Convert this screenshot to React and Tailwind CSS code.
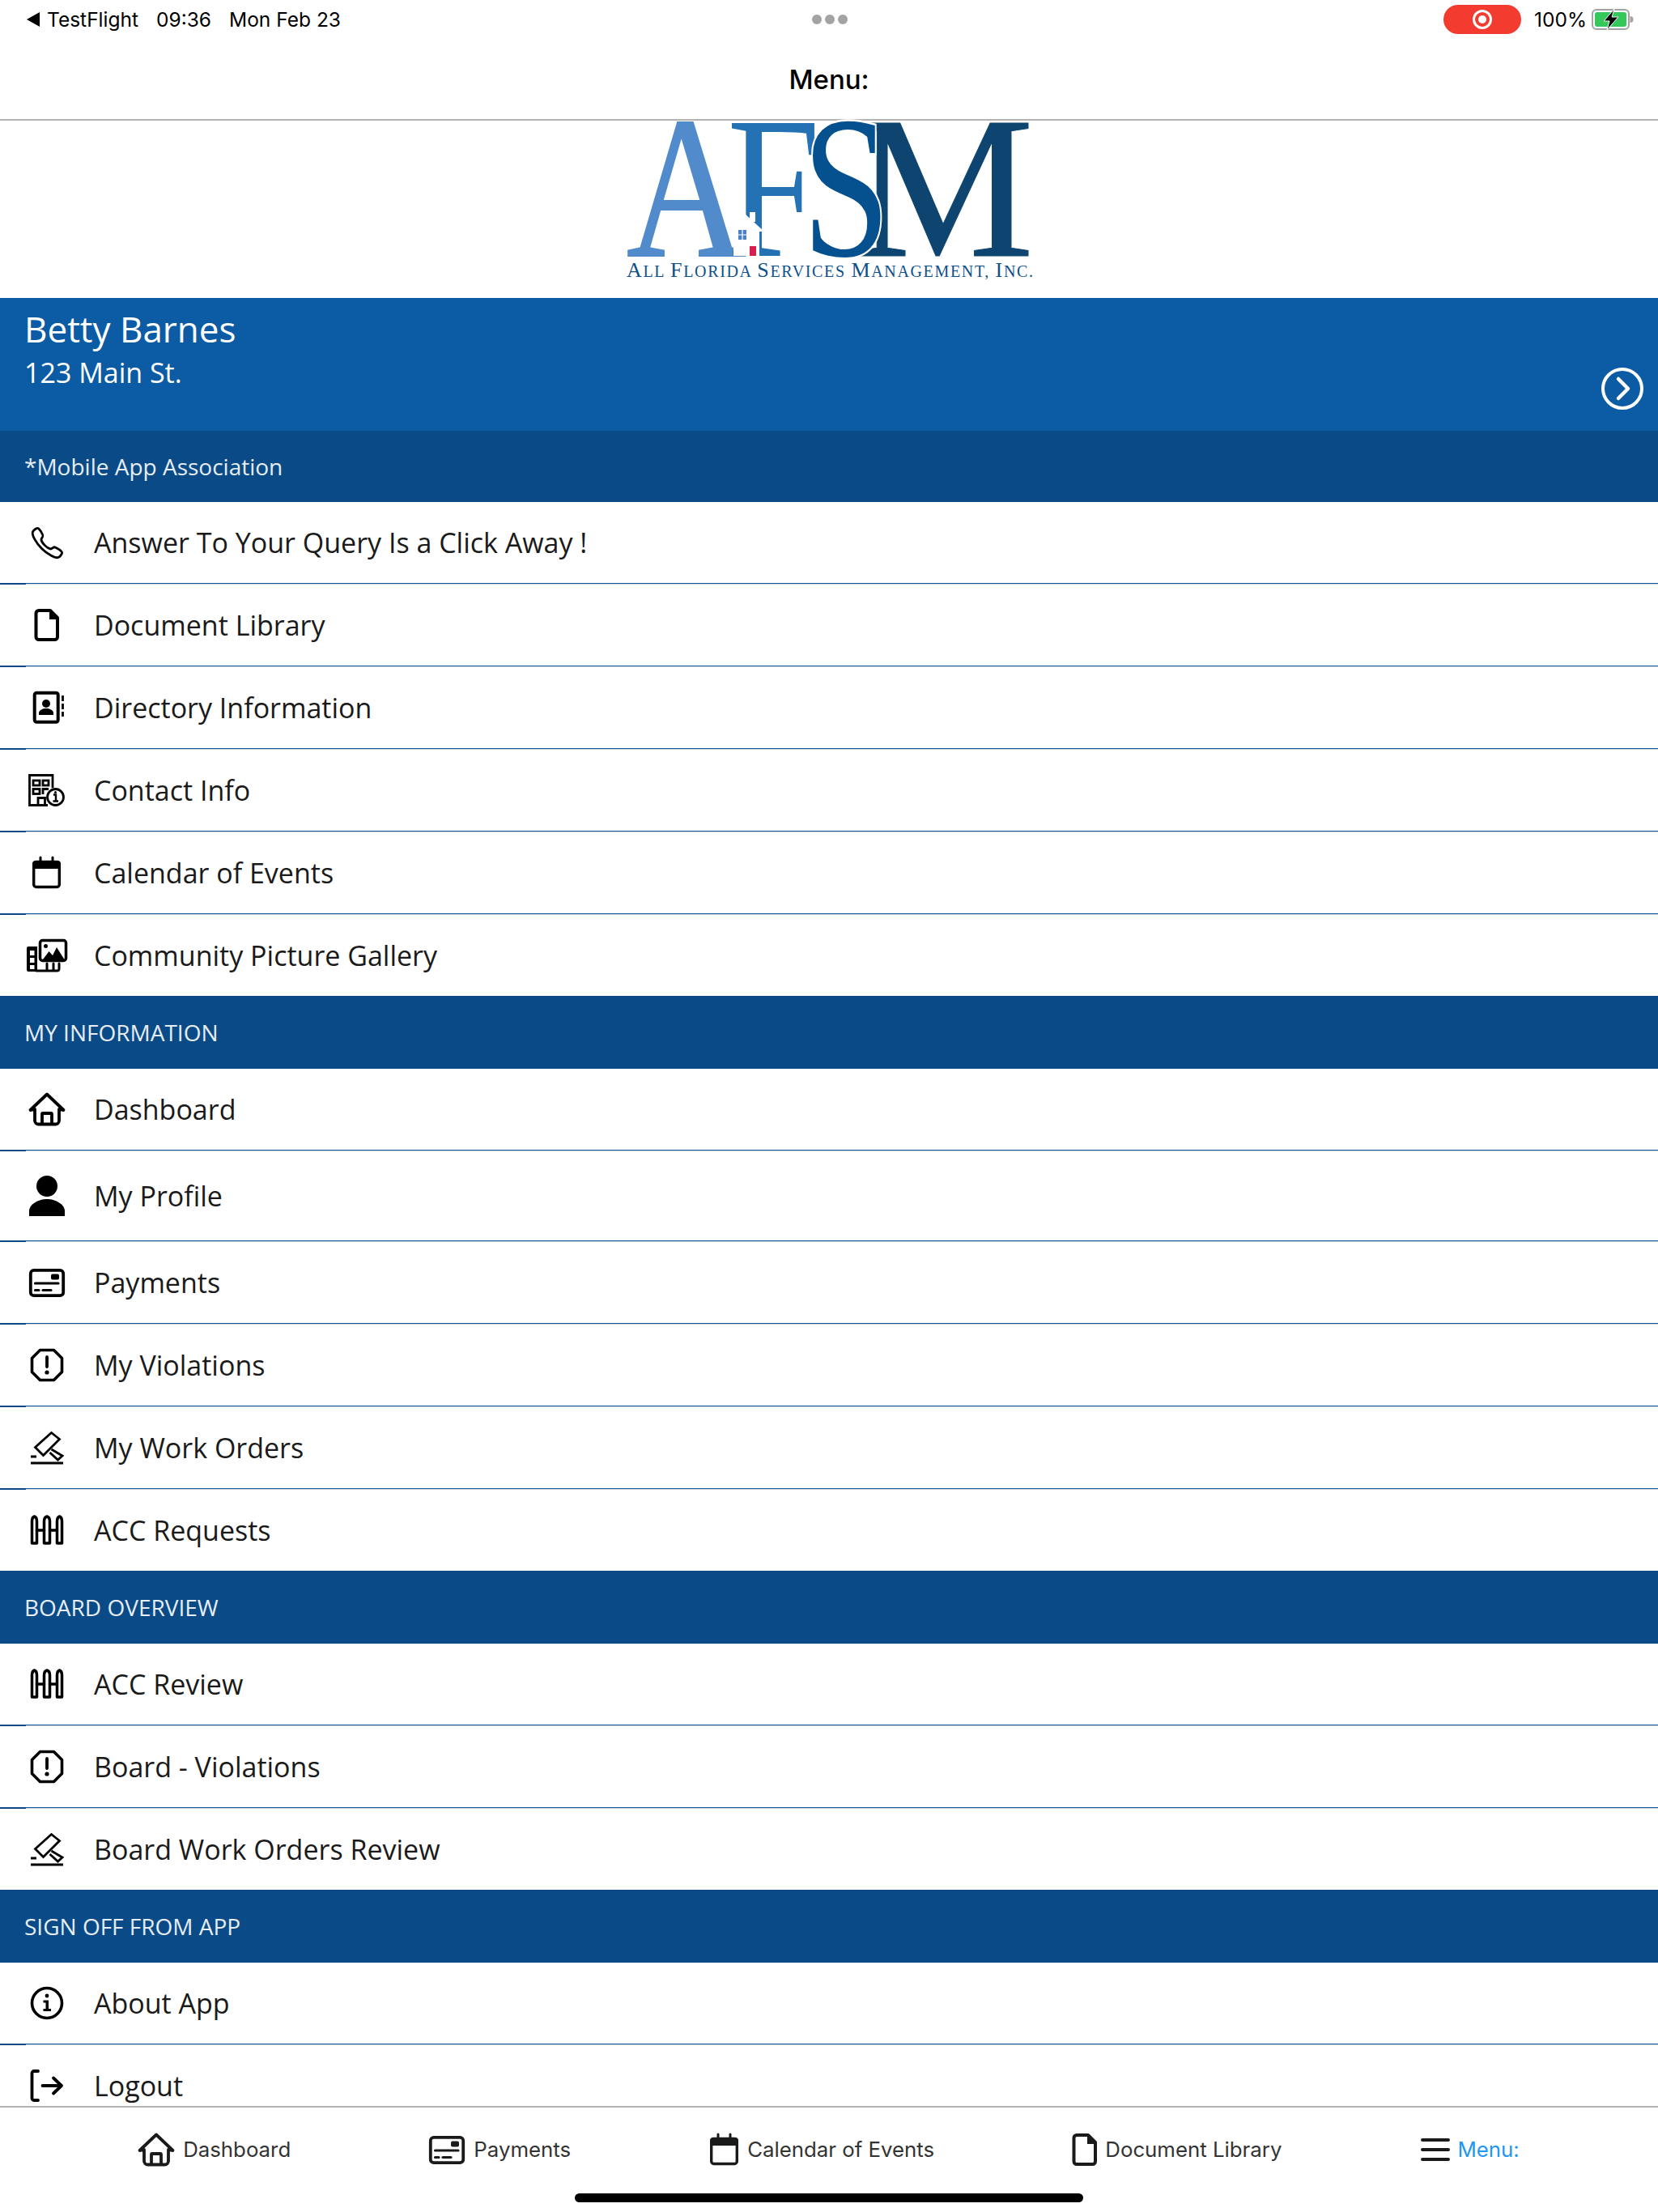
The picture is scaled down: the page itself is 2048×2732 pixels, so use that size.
import React from 'react';
import { IoCallOutline } from 'react-icons/io5';

const Svg = ({ box = '0 0 48 48', className = 'w-[48px] h-[48px]', children }) => (
  <svg viewBox={box} className={`${className} shrink-0 overflow-visible`} fill="none" stroke="currentColor" strokeWidth="3.5" strokeLinecap="round" strokeLinejoin="round">
    {children}
  </svg>
);

const PhoneIcon = () => <div className="w-[48px] h-[48px] flex items-center justify-center text-[45px]"><IoCallOutline /></div>;

const DocIcon = (p) => (
  <Svg {...p}>
    <path d="M14 6 H28 L37 15 V38.5 a3.5 3.5 0 0 1 -3.5 3.5 H14 a3.5 3.5 0 0 1 -3.5 -3.5 V9.5 a3.5 3.5 0 0 1 3.5 -3.5 Z" strokeWidth="4" />
    <path d="M27 6 L38 17 H27 Z" fill="currentColor" stroke="none" />
  </Svg>
);

const DirectoryIcon = (p) => (
  <Svg {...p}>
    <rect x="8.7" y="5.7" width="29" height="36" rx="2.5" strokeWidth="4" />
    <circle cx="23" cy="19" r="5" fill="currentColor" stroke="none" />
    <path d="M14 33 v-2.5 c0 -3.5 5 -5.5 9 -5.5 s9 2 9 5.5 v2.5 Z" fill="currentColor" stroke="none" />
    <path d="M43.5 9 v7 M43.5 19 v7 M43.5 29 v6" strokeWidth="2.8" strokeLinecap="butt" />
  </Svg>
);

const BuildingIcon = (p) => (
  <Svg {...p}>
    <g strokeWidth="2.8" strokeLinejoin="miter" strokeLinecap="butt">
      <path d="M25 42.5 H2.5 V5.5 H31 V21" />
      <rect x="7" y="12" width="8" height="6" />
      <rect x="19" y="12" width="7" height="6" />
      <rect x="7" y="22.5" width="8" height="6" />
      <path d="M26 22.5 H19 V29" />
      <path d="M13 42.5 V33.5 H21.5 V42.5" />
      <circle cx="34.5" cy="32.5" r="10" />
      <path d="M32 29.5 H35 V37 M31.5 37.5 H38" strokeWidth="2.4" />
    </g>
    <circle cx="34.5" cy="26.5" r="1.5" fill="currentColor" stroke="none" />
  </Svg>
);

const CalendarIcon = (p) => (
  <Svg {...p}>
    <rect x="7.7" y="10.5" width="31.6" height="31" rx="3" strokeWidth="3.4" />
    <path d="M6 13 a4 4 0 0 1 4 -4 H37 a4 4 0 0 1 4 4 V19 H6 Z" fill="currentColor" stroke="none" />
    <path d="M16 5 v4 M31 5 v4" strokeWidth="3" />
  </Svg>
);

const GalleryIcon = (p) => (
  <Svg {...p}>
    <rect x="15.5" y="5.5" width="32" height="25" rx="3" />
    <path d="M19 29 L26.5 19 L31 24 L36 14 L45.5 29 Z" fill="currentColor" stroke="none" />
    <circle cx="22.5" cy="12.5" r="2.5" fill="currentColor" stroke="none" />
    <path d="M39 34 V41 a2.5 2.5 0 0 1 -2.5 2 H11 M24 34 v9 M32 34 v9" strokeWidth="3" />
    <path d="M1 13 H12 V44 H1 a2 2 0 0 1 -2 -2 V15 a2 2 0 0 1 2 -2 Z" fill="currentColor" stroke="none" />
    <path d="M3 18 H8.5 V24 H3 Z M3 27 H8.5 V33 H3 Z M3 36 H8.5 V41 H3 Z" fill="#fff" stroke="none" />
  </Svg>
);

const HomeIcon = (p) => (
  <Svg {...p}>
    <path d="M3.5 25 L24 5.5 L44.5 25" strokeWidth="3.8" />
    <path d="M4 25 H8.5 M39.5 25 H44" strokeWidth="3" />
    <path d="M9 24 V38 a4.5 4.5 0 0 0 4.5 4.5 H34.5 a4.5 4.5 0 0 0 4.5 -4.5 V24" strokeWidth="3.8" />
    <path d="M18 42 V30 a1 1 0 0 1 1 -1 H29 a1 1 0 0 1 1 1 V42" strokeWidth="3.8" />
  </Svg>
);

const PersonIcon = () => (
  <svg viewBox="0 0 48 52" className="w-[48px] h-[52px] shrink-0" fill="currentColor">
    <circle cx="24" cy="14" r="13" />
    <path d="M2 51 V45 C2 36 14 30 24 30 C34 30 46 36 46 45 V51 Z" />
  </svg>
);

const CardIcon = (p) => (
  <Svg {...p}>
    <rect x="3.8" y="8.8" width="40.4" height="31.4" rx="4" strokeWidth="3.8" />
    <rect x="29" y="13.5" width="10" height="7" rx="2" fill="currentColor" stroke="none" />
    <path d="M9.5 25 H38 M9.5 33.5 H14 M19 33.5 H29" strokeWidth="3.2" />
  </Svg>
);

const OctagonIcon = (p) => (
  <Svg {...p}>
    <path d="M15.5 5.5 H32.5 L42.5 15.5 V32.5 L32.5 42.5 H15.5 L5.5 32.5 V15.5 Z" strokeWidth="3.6" />
    <path d="M24 14 V26" strokeWidth="3.8" />
    <circle cx="24" cy="33" r="2.6" fill="currentColor" stroke="none" />
  </Svg>
);

const GavelIcon = (p) => (
  <Svg {...p}>
    <g strokeWidth="2.8" strokeLinecap="butt" strokeLinejoin="miter">
      <path d="M9.5 23.5 L29.5 5.5 L39.5 13.5 L19.5 33.5 Z" />
      <path d="M29.5 26 L43 34 L37.5 39 L27.5 30" />
      <path d="M4 43 H44 M4 35 H11" />
    </g>
  </Svg>
);

const FenceIcon = (p) => (
  <Svg {...p}>
    <g strokeWidth="3.5">
      <path d="M5.5 40 V13 Q5.5 8 8.5 7 Q11.5 8 11.5 13 V40 Z" />
      <path d="M20.5 40 V13 Q20.5 8 24 7 Q27.5 8 27.5 13 V40 Z" />
      <path d="M36.5 40 V13 Q36.5 8 39.5 7 Q42.5 8 42.5 13 V40 Z" />
      <path d="M11.5 24 H20.5 M27.5 24 H36.5" />
    </g>
  </Svg>
);

const InfoIcon = (p) => (
  <Svg {...p}>
    <circle cx="24" cy="24" r="18.5" strokeWidth="3.6" />
    <circle cx="24" cy="15" r="2.4" fill="currentColor" stroke="none" />
    <path d="M19.5 20.5 H26 V31 H29 V34 H19.5 V31 H22.5 V23.5 H19.5 Z" fill="currentColor" stroke="none" />
  </Svg>
);

const LogoutIcon = (p) => (
  <Svg {...p}>
    <path d="M13 6 H8 a2.5 2.5 0 0 0 -2.5 2.5 V39.5 a2.5 2.5 0 0 0 2.5 2.5 H13" strokeWidth="3.8" />
    <path d="M18.5 24 H42 M32 14.5 L42 24 L32 33.5" strokeWidth="3.8" />
  </Svg>
);

const MenuIcon = () => (
  <svg viewBox="0 0 36 30" className="w-[36px] h-[30px] shrink-0" fill="none" stroke="#1a1a1a" strokeWidth="4" strokeLinecap="round">
    <path d="M2 3 H34 M2 15 H34 M2 27 H34" />
  </svg>
);

const Logo = () => (
  <svg viewBox="0 0 568 219" className="w-[568px] h-[219px] overflow-visible" fontFamily="'Liberation Serif', serif">
    <text transform="translate(34 167) scale(0.82 1)" fontSize="250" fill="#528bcb" stroke="#528bcb" strokeWidth="2">A</text>
    <text transform="translate(158 167) scale(0.83 1)" fontSize="250" fill="#2472b4">F</text>
    <text transform="translate(315 167)" fontSize="250" fill="#0e4570" stroke="#0e4570" strokeWidth="1">M</text>
    <text transform="translate(251 167) scale(0.78 1)" fontSize="250" fill="#05508e" stroke="#fff" strokeWidth="5" paintOrder="stroke">S</text>
    <path d="M181 116 L204 137 L198 137 V167 H166 V137 L160 137 Z" fill="#fff" />
    <rect x="186" y="113" width="7" height="12" fill="#fff" />
    <path d="M172 135 H182 V147 H172 Z" fill="#4a80c4" />
    <path d="M177 135 V147 M172 141 H182" stroke="#fff" strokeWidth="1.2" />
    <rect x="186" y="155" width="8" height="12" fill="#d61f4c" />
    <text x="34" y="193" textLength="502" lengthAdjust="spacing" fontSize="20" fill="#0d4f8b">
      <tspan fontSize="26">A</tspan>LL <tspan fontSize="26">F</tspan>LORIDA <tspan fontSize="26">S</tspan>ERVICES <tspan fontSize="26">M</tspan>ANAGEMENT, <tspan fontSize="26">I</tspan>NC.
    </text>
  </svg>
);

const Divider = () => (
  <div className="flex h-[2px] shrink-0">
    <div className="w-[32px] bg-[#0a4a86]" />
    <div className="flex-1 border-t border-b border-t-[#0f5797] border-b-[#cfd6dc]" />
  </div>
);

const Row = ({ icon, label, tall }) => (
  <div className={`${tall ? 'h-[110px]' : 'h-[100px]'} flex items-center pl-[34px] shrink-0`}>
    {icon}
    <span className="ml-[34px] text-[34px] text-[#1a1a1a]">{label}</span>
  </div>
);

const Section = ({ title, h = 'h-[90px]', rows }) => (
  <>
    <div className={`${h} shrink-0 bg-[#0a4a86] flex items-center pl-[30px] text-[28px] text-[#e6edf4]`}>{title}</div>
    {rows.map((r, i) => (
      <React.Fragment key={r.label}>
        <Row {...r} />
        {i < rows.length - 1 && <Divider />}
      </React.Fragment>
    ))}
  </>
);

const sections = [
  {
    title: '*Mobile App Association', h: 'h-[88px]',
    rows: [
      { icon: <PhoneIcon />, label: 'Answer To Your Query Is a Click Away !' },
      { icon: <DocIcon />, label: 'Document Library' },
      { icon: <DirectoryIcon />, label: 'Directory Information' },
      { icon: <BuildingIcon />, label: 'Contact Info' },
      { icon: <CalendarIcon />, label: 'Calendar of Events' },
      { icon: <GalleryIcon />, label: 'Community Picture Gallery' },
    ],
  },
  {
    title: 'MY INFORMATION',
    rows: [
      { icon: <HomeIcon />, label: 'Dashboard' },
      { icon: <PersonIcon />, label: 'My Profile', tall: true },
      { icon: <CardIcon />, label: 'Payments' },
      { icon: <OctagonIcon />, label: 'My Violations' },
      { icon: <GavelIcon />, label: 'My Work Orders' },
      { icon: <FenceIcon />, label: 'ACC Requests' },
    ],
  },
  {
    title: 'BOARD OVERVIEW',
    rows: [
      { icon: <FenceIcon />, label: 'ACC Review' },
      { icon: <OctagonIcon />, label: 'Board - Violations' },
      { icon: <GavelIcon />, label: 'Board Work Orders Review' },
    ],
  },
  {
    title: 'SIGN OFF FROM APP',
    rows: [
      { icon: <InfoIcon />, label: 'About App' },
      { icon: <LogoutIcon />, label: 'Logout' },
    ],
  },
];

const tabs = [
  { icon: <HomeIcon box="2 4 45 40" className="w-[45px] h-[40px]" />, label: 'Dashboard' },
  { icon: <CardIcon box="2 7 45 35" className="w-[45px] h-[35px]" />, label: 'Payments' },
  { icon: <CalendarIcon box="5 4 37 40" className="w-[37px] h-[40px]" />, label: 'Calendar of Events' },
  { icon: <DocIcon box="9 4 30 40" className="w-[30px] h-[40px]" />, label: 'Document Library' },
  { icon: <MenuIcon />, label: 'Menu:', active: true },
];

export default function App() {
  return (
    <div className="w-[2048px] h-[2732px] flex flex-col bg-white overflow-hidden font-['Open_Sans',sans-serif]">
      <div className="h-[50px] shrink-0 grid grid-cols-3 items-center pl-[33px] pr-[30px] pb-[2px] font-['Inter',sans-serif] text-[24.5px] text-black">
        <div className="flex items-center">
          <span className="w-0 h-0 border-y-[9px] border-y-transparent border-r-[16px] border-r-black" />
          <span className="ml-[9px]">TestFlight</span>
          <span className="ml-[22px]">09:36</span>
          <span className="ml-[22px]">Mon Feb 23</span>
        </div>
        <div className="flex justify-center gap-[4px]">
          <span className="w-[12px] h-[12px] rounded-full bg-[#a3a3a3]" />
          <span className="w-[12px] h-[12px] rounded-full bg-[#a3a3a3]" />
          <span className="w-[12px] h-[12px] rounded-full bg-[#a3a3a3]" />
        </div>
        <div className="flex items-center justify-end">
          <div className="w-[96px] h-[36px] rounded-[18px] bg-[#f33b30] flex items-center justify-center">
            <span className="w-[24px] h-[24px] rounded-full border-[3px] border-white flex items-center justify-center">
              <span className="w-[10px] h-[10px] rounded-full bg-white" />
            </span>
          </div>
          <span className="ml-[16px]">100%</span>
          <svg viewBox="0 0 52 26" className="ml-[6px] w-[52px] h-[26px]">
            <rect x="1" y="1" width="45" height="24" rx="5" fill="none" stroke="#a3a3a3" strokeWidth="2" />
            <rect x="4" y="4" width="39" height="18" rx="3" fill="#34c759" />
            <path d="M47.5 9 a4 4 0 0 1 0 8 Z" fill="#a3a3a3" />
            <path d="M28 0 L15 15 H22 L19 26 L33 10 H25 Z" fill="#000" stroke="#fff" strokeWidth="1" />
          </svg>
        </div>
      </div>

      <div className="h-[99px] shrink-0 flex items-center justify-center border-b-2 border-[#b3b3b3] font-['Inter',sans-serif] text-[33px] font-medium text-black">Menu:</div>

      <div className="h-[219px] shrink-0 flex justify-center">
        <Logo />
      </div>

      <div className="h-[164px] shrink-0 bg-[#0c5ca5] flex justify-between pl-[30px] pr-[18px] text-white">
        <div className="pt-[8px]">
          <div className="text-[44px] leading-[60px]">Betty Barnes</div>
          <div className="mt-[2px] text-[34px] leading-[44px]">123 Main St.</div>
        </div>
        <svg viewBox="0 0 52 52" className="self-end mb-[26px] w-[52px] h-[52px]" fill="none" stroke="#fff" strokeWidth="4" strokeLinecap="round" strokeLinejoin="round">
          <circle cx="26" cy="26" r="24" />
          <path d="M21 14 L33 26 L21 38" strokeWidth="4.5" />
        </svg>
      </div>

      <div className="flex-1 min-h-0 overflow-hidden flex flex-col">
        {sections.map((s) => <Section key={s.title} {...s} />)}
      </div>

      <div className="h-[131px] shrink-0 border-t-2 border-[#b3b3b3] relative">
        <div className="h-[104px] flex items-center justify-evenly font-['Inter',sans-serif] text-[25.8px]">
          {tabs.map((t) => (
            <div key={t.label} className="flex items-center gap-[10px] text-[#1a1a1a]">
              {t.icon}
              <span className={t.active ? 'text-[#2196f3]' : 'text-[#333]'}>{t.label}</span>
            </div>
          ))}
        </div>
        <div className="mt-[2px] mx-auto w-[628px] h-[11px] rounded-full bg-black" />
      </div>
    </div>
  );
}
